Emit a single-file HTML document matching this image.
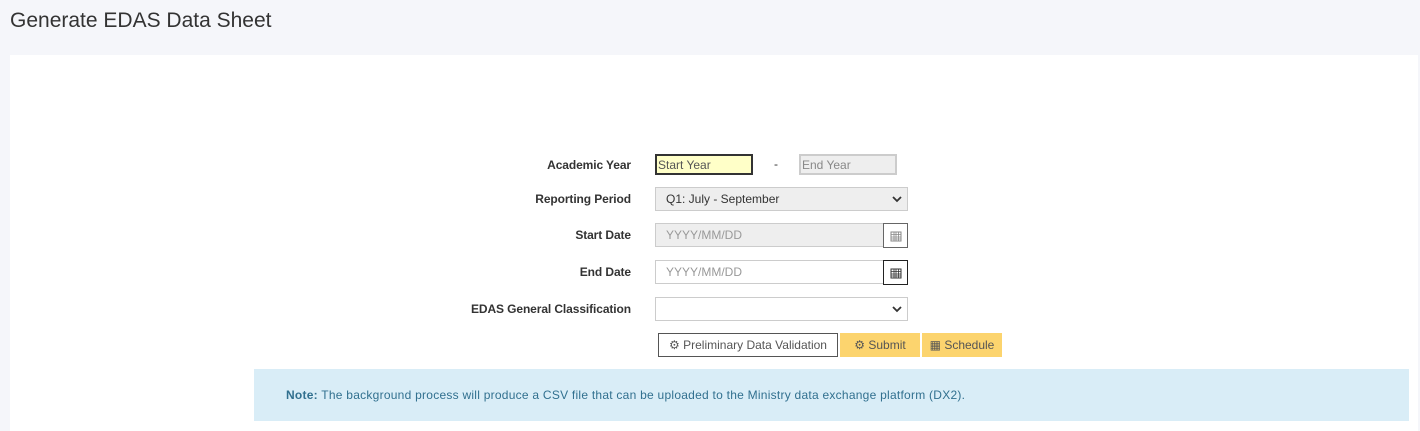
<!DOCTYPE html>
<html><head><style>
body{margin:0;width:1420px;height:431px;background:#f5f6fa;font-family:"Liberation Sans",sans-serif;position:relative;overflow:hidden;color:#333}
.a{position:absolute}
.lbl{position:absolute;right:789px;font-size:12px;font-weight:bold;color:#333;letter-spacing:-.1px}
.inp{position:absolute;box-sizing:border-box;font-size:12px;color:#999;padding-left:10px;line-height:normal;display:flex;align-items:center}
.cal{position:absolute;box-sizing:border-box;width:25px;height:25px;background:#fff;display:flex;align-items:center;justify-content:center}
.btn{position:absolute;box-sizing:border-box;height:24px;top:333px;font-size:12px;color:#555;display:flex;align-items:center;justify-content:center}
</style></head><body>
<div class="a" style="left:10px;top:9px;font-size:21px;color:#333">Generate EDAS Data Sheet</div>
<div class="a" style="left:10px;top:55px;width:1408px;height:376px;background:#fff"></div>

<div class="lbl" style="top:158px">Academic Year</div>
<div class="inp" style="left:655px;top:154px;width:98px;height:21px;background:#ffffc8;border:2px solid #333;color:#555;padding-left:1px">Start Year</div>
<div class="a" style="left:774px;top:157px;font-size:12px">-</div>
<div class="inp" style="left:799px;top:154px;width:98px;height:21px;background:#eee;border:2px solid #ccc;color:#888;padding-left:1px">End Year</div>

<div class="lbl" style="top:192px">Reporting Period</div>
<div class="inp" style="left:655px;top:187px;width:253px;height:24px;background:#eee;border:1px solid #ccc;color:#333">Q1: July - September</div>
<svg class="a" style="left:892px;top:195px" width="10" height="8"><path d="M1 2l4 4 4-4" stroke="#333" stroke-width="1.8" fill="none"/></svg>

<div class="lbl" style="top:228px">Start Date</div>
<div class="inp" style="left:655px;top:223px;width:229px;height:24px;background:#eee;border:1px solid #ccc">YYYY/MM/DD</div>
<div class="cal" style="left:883px;top:223px;border:1px solid #666"><svg width="12" height="12"><rect x="1" y="2" width="10" height="9" fill="none" stroke="#888"/><path d="M1 4.5h10M1 7h10M1 9h10M4 2v9M6 2v9M8.5 2v9" stroke="#888" stroke-width=".8"/></svg></div>

<div class="lbl" style="top:265px">End Date</div>
<div class="inp" style="left:655px;top:260px;width:229px;height:24px;background:#fff;border:1px solid #ccc">YYYY/MM/DD</div>
<div class="cal" style="left:883px;top:260px;border:1px solid #222"><svg width="12" height="12"><rect x="1" y="2" width="10" height="9" fill="none" stroke="#333"/><path d="M1 4.5h10M1 7h10M1 9h10M4 2v9M6 2v9M8.5 2v9" stroke="#333" stroke-width=".8"/></svg></div>

<div class="lbl" style="top:302px">EDAS General Classification</div>
<div class="inp" style="left:655px;top:297px;width:253px;height:24px;background:#fff;border:1px solid #ccc"></div>
<svg class="a" style="left:892px;top:305px" width="10" height="8"><path d="M1 2l4 4 4-4" stroke="#333" stroke-width="1.8" fill="none"/></svg>

<div class="btn" style="left:658px;width:180px;border:1px solid #555;background:#fff">⚙ Preliminary Data Validation</div>
<div class="btn" style="left:840px;width:80px;background:#fcd46e">⚙ Submit</div>
<div class="btn" style="left:922px;width:80px;background:#fcd46e">▦ Schedule</div>

<div class="a" style="left:254px;top:369px;width:1155px;height:52px;background:#d9edf7;color:#31708f;font-size:12px;letter-spacing:.25px;box-sizing:border-box;padding:19px 0 0 32px"><b>Note:</b> The background process will produce a CSV file that can be uploaded to the Ministry data exchange platform (DX2).</div>
</body></html>
